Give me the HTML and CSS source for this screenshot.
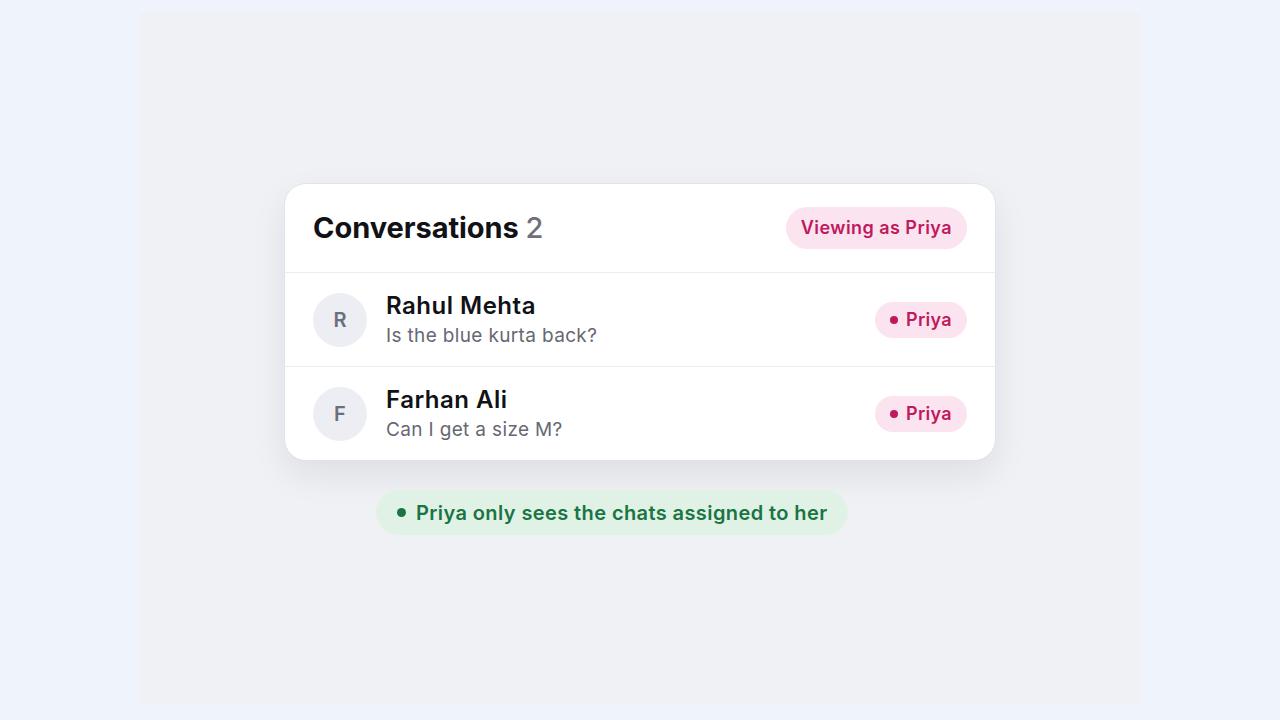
FILE: index.html
```html
<!DOCTYPE html>
<html lang="en">
<head>
    <meta charset="UTF-8">
    <meta name="viewport" content="width=device-width, initial-scale=1.0">
    <title>Conversations</title>
    <link rel="stylesheet" href="styles.css">
</head>
<body>
    <div class="stage">
        <div class="card">
            <div class="card-head">
                <h1>Conversations <span class="count">2</span></h1>
                <span class="viewing">Viewing as Priya</span>
            </div>
            <div class="row">
                <div class="avatar">R</div>
                <div class="info">
                    <div class="name">Rahul Mehta</div>
                    <div class="msg">Is the blue kurta back?</div>
                </div>
                <span class="tag"><i class="dot"></i>Priya</span>
            </div>
            <div class="row">
                <div class="avatar">F</div>
                <div class="info">
                    <div class="name">Farhan Ali</div>
                    <div class="msg">Can I get a size M?</div>
                </div>
                <span class="tag"><i class="dot"></i>Priya</span>
            </div>
        </div>
        <div class="note"><i class="dot"></i>Priya only sees the chats assigned to her</div>
    </div>
</body>
</html>
```

FILE: styles.css
```css
body {
    margin: 0;
    background-color: #eff3fb;
    font-family: Inter, "Noto Sans", sans-serif;
    height: 720px;
    overflow: hidden;
}

.stage {
    width: 1000px;
    height: 692px;
    margin: 13px auto 0;
    background-color: #f0f1f5;
    display: flex;
    flex-direction: column;
    align-items: center;
    justify-content: center;
    gap: 29px;
}

.card {
    width: 710px;
    background-color: #fff;
    border: 1px solid #e3e4ea;
    border-radius: 22px;
    box-shadow: 0 14px 34px rgba(20, 24, 40, 0.08);
    overflow: hidden;
}

.card-head {
    display: flex;
    justify-content: space-between;
    align-items: center;
    height: 88px;
    padding: 0 28px;
    border-bottom: 1px solid #ebecf0;
}

h1 {
    margin: 0 0 2px;
    font-size: 29px;
    font-weight: 700;
    color: #111216;
    letter-spacing: -0.05px;
}

.count {
    font-weight: 500;
    color: #6f7079;
}

.viewing {
    background-color: #fbe4f0;
    color: #bf1a5e;
    font-size: 18px;
    font-weight: 600;
    letter-spacing: 0.45px;
    padding: 0 15px;
    height: 42px;
    line-height: 42px;
    border-radius: 21px;
}

.row {
    display: flex;
    align-items: center;
    height: 93px;
    padding: 0 28px;
    border-bottom: 1px solid #ebecf0;
}

.row:last-child {
    border-bottom: none;
}

.avatar {
    width: 54px;
    height: 54px;
    border-radius: 50%;
    background-color: #eceef3;
    color: #6b6e7c;
    font-size: 20px;
    font-weight: 600;
    display: flex;
    align-items: center;
    justify-content: center;
    margin-right: 19px;
}

.info {
    flex: 1;
}

.name {
    font-size: 24px;
    font-weight: 600;
    color: #111216;
    letter-spacing: 0.5px;
    margin-top: -2px;
}

.msg {
    font-size: 19px;
    color: #666873;
    letter-spacing: 0.35px;
    margin-top: 4px;
}

.tag {
    display: flex;
    align-items: center;
    gap: 8px;
    background-color: #fbe4f0;
    color: #bf1a5e;
    font-size: 18px;
    font-weight: 600;
    letter-spacing: 0.3px;
    padding: 0 15px;
    height: 36px;
    border-radius: 18px;
}

.dot {
    width: 8px;
    height: 8px;
    border-radius: 50%;
    background-color: currentColor;
}

.note {
    align-self: flex-start;
    margin-left: 236px;
    display: flex;
    align-items: center;
    gap: 10px;
    background-color: #e0f2e6;
    color: #1b7443;
    font-size: 20px;
    font-weight: 600;
    letter-spacing: 0.4px;
    height: 45px;
    padding: 0 21px;
    border-radius: 23px;
}

.note .dot {
    width: 9px;
    height: 9px;
}
```
